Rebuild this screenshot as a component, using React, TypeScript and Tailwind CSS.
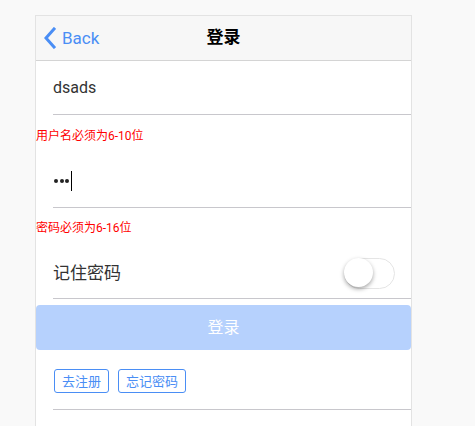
import { useState } from "react";

export default function App() {
  const [remember, setRemember] = useState(false);

  return (
    <div
      className="min-h-[426px] w-full bg-[#f9f9f9] pt-[15px] pl-[35px]"
      style={{ fontFamily: 'Roboto, "Noto Sans CJK SC", sans-serif' }}
    >
      <div className="w-[377px] border border-[#e3e3e3] bg-white">
        {/* HEADER */}
        <div className="relative flex h-[45px] items-center border-b border-[#d4d4d4] bg-[#f7f7f7]">
          <div className="flex items-center pl-[8px] text-[#4a8ef5]">
            <svg width="12" height="22" viewBox="0 0 12 22" className="mt-[-1px]">
              <path d="M10 2 L2 11 L10 20" fill="none" stroke="currentColor" strokeWidth="3" strokeLinecap="square" />
            </svg>
            <span className="ml-[6px] text-[17px] leading-none">Back</span>
          </div>
          <div className="absolute left-0 right-0 text-center text-[17px] font-bold text-black">登录</div>
        </div>

        {/* USERNAME */}
        <div className="pl-[17px]">
          <div className="flex h-[54px] items-center border-b border-[#c8c7cc] text-[16px] text-[#333]">dsads</div>
        </div>
        <div className="flex h-[39px] items-center pt-[3px] text-[12px] text-[#ff0000]">用户名必须为6-10位</div>

        {/* PASSWORD */}
        <div className="pl-[17px]">
          <div className="flex h-[54px] items-center border-b border-[#c8c7cc] pl-[1px]">
            <span className="flex gap-[1.5px]">
              <span className="h-[4px] w-[4px] rounded-full bg-[#222]" />
              <span className="h-[4px] w-[4px] rounded-full bg-[#222]" />
              <span className="h-[4px] w-[4px] rounded-full bg-[#222]" />
            </span>
            <span className="ml-[1.5px] h-[20px] w-[1.5px] bg-black" />
          </div>
        </div>
        <div className="flex h-[38px] items-center pt-[2px] text-[12px] text-[#ff0000]">密码必须为6-16位</div>

        {/* REMEMBER */}
        <div className="pl-[17px]">
          <div className="flex h-[53px] items-center justify-between border-b border-[#c8c7cc] pr-[16px] pt-[2px]">
            <span className="pt-[2px] text-[17px] text-[#333]">记住密码</span>
            <button
              onClick={() => setRemember(!remember)}
              className={`relative h-[31px] w-[51px] rounded-full border-[1.5px] transition ${remember ? "border-[#4cd964] bg-[#4cd964]" : "border-[#e5e5e5] bg-white"}`}
            >
              <span
                className={`absolute top-[-0.5px] h-[29px] w-[29px] rounded-full bg-white shadow-[0_2px_4px_rgba(0,0,0,0.35)] transition ${remember ? "left-[20px]" : "left-[-1px]"}`}
              />
            </button>
          </div>
        </div>

        {/* LOGIN BUTTON */}
        <div className="pt-[6px]">
          <button className="flex h-[45px] w-full items-center justify-center rounded-[4px] bg-[#b6d1fd] text-[16px] text-white">
            登录
          </button>
        </div>

        {/* LINKS */}
        <div className="pl-[17px]">
          <div className="flex h-[60px] items-center gap-[9px] border-b border-[#c8c7cc] pl-[1px] pt-[3px]">
            <button className="h-[24px] rounded-[3px] border border-[#4a8ef5] px-[7px] text-[13px] leading-none text-[#4a8ef5]">去注册</button>
            <button className="h-[24px] rounded-[3px] border border-[#4a8ef5] px-[7px] text-[13px] leading-none text-[#4a8ef5]">忘记密码</button>
          </div>
        </div>
        <div className="h-[20px]" />
      </div>
    </div>
  );
}
